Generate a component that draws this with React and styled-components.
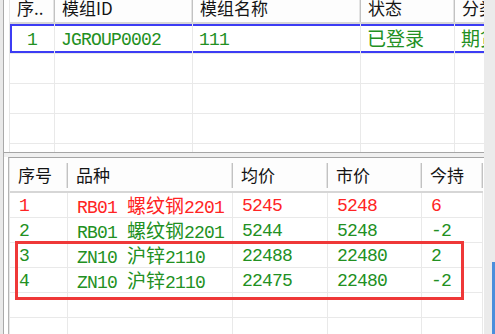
import React from "react";
import styled, { createGlobalStyle } from "styled-components";

const GlobalStyle = createGlobalStyle`
  html, body {
    margin: 0;
    padding: 0;
    width: 495px;
    height: 334px;
    overflow: hidden;
    background: #ececec;
  }
  #root {
    height: 334px;
  }
`;

const Screen = styled.div`
  display: flex;
  height: 334px;
  padding-left: 3px;
  box-sizing: border-box;
  background: #e9e9e9;
`;

const Frame = styled.div`
  width: 480px;
  border-left: 1px solid #a9a9a9;
  background: #ffffff;
  display: flex;
  flex-direction: column;
  overflow: hidden;
`;

const Gutter = styled.div`
  flex: 1;
  display: flex;
  flex-direction: column;
  align-items: flex-end;
  background: #ebebeb;
`;

const OtherWindowEdge = styled.div`
  margin-top: auto;
  width: 3px;
  height: 72px;
  background: #4a8fdc;
`;

const TopPanel = styled.div`
  height: 152px;
  flex: none;
  padding-left: 5px;
  overflow: hidden;
  border-bottom: 1px solid #a6a6a6;
`;

const Splitter = styled.div`
  height: 4px;
  flex: none;
  background: #f0f0f0;
  margin-left: -1px;
`;

const BottomPanel = styled.div`
  flex: 1;
  margin-left: 4px;
  border-left: 1px solid #b4b4b4;
  border-top: 1px solid #a6a6a6;
  overflow: hidden;
`;

const Grid = styled.div`
  width: max-content;
  border-left: 1px solid #e6e6e6;
`;

const Row = styled.div`
  display: grid;
  grid-template-columns: ${(p) => p.$cols};
  height: ${(p) => p.$h}px;
`;

const Body = styled.div`
  position: relative;
`;

const HeadCell = styled.div`
  position: relative;
  display: flex;
  align-items: center;
  padding: 0 0 ${(p) => p.$lift}px ${(p) => p.$pad}px;
  box-sizing: border-box;
  background: #fdfdfd;
  border-bottom: 2px solid #d6d6d6;
  font-family: "Noto Sans CJK SC", "Noto Sans", sans-serif;
  font-size: 17px;
  line-height: 18px;
  color: #141414;
  white-space: nowrap;
  overflow: hidden;

  &::after {
    content: "";
    position: absolute;
    right: 0;
    top: ${(p) => p.$sepTop}px;
    bottom: ${(p) => p.$sepBottom}px;
    width: 1px;
    background: #c2c2c2;
    box-shadow: -1px 0 0 #e4e4e4;
  }
`;

const Cell = styled.div`
  display: flex;
  align-items: center;
  justify-content: ${(p) => (p.$center ? "center" : "flex-start")};
  padding-left: ${(p) => (p.$center ? 0 : p.$pad)}px;
  box-sizing: border-box;
  border-right: 1px solid #e9e9e9;
  border-bottom: 1px solid #e9e9e9;
  font-family: "Liberation Mono", "Noto Sans CJK SC", monospace;
  font-size: 18px;
  letter-spacing: -0.8px;
  color: ${(p) => p.$color || "#229022"};
  white-space: pre;
  overflow: hidden;
  box-shadow: ${(p) =>
    p.$selected
      ? `inset 0 2px 0 #3c3cf4, inset 0 -2px 0 #3c3cf4${p.$first ? ", inset 2px 0 0 #3c3cf4" : ""}`
      : "none"};
`;

const CellText = styled.span`
  display: block;
  line-height: 20px;
  padding-top: 2px;
`;

const Han = styled.span`
  font-family: "Noto Sans CJK SC", sans-serif;
  font-size: 19px;
  line-height: 1;
  letter-spacing: 0;
`;

const Marker = styled.div`
  position: absolute;
  left: 5px;
  top: 48px;
  width: 449px;
  height: 59px;
  box-sizing: border-box;
  border: 3px solid #ef3838;
  pointer-events: none;
`;

const TOP_COLS = "45px 138px 168px 94px 90px";
const BOTTOM_COLS = "58px 165px 95px 94px 61px";

const topHeads = ["序..", "模组ID", "模组名称", "状态", "分类"];
const topRows = [["1", "JGROUP0002", "111", "已登录", "期货"], null, null, null, null];

const bottomHeads = ["序号", "品种", "均价", "市价", "今持"];
const RED = "#ff2424";
const bottomRows = [
  { color: RED, cells: ["1", "RB01 螺纹钢2201", "5245", "5248", "6"] },
  { cells: ["2", "RB01 螺纹钢2201", "5244", "5248", "-2"] },
  { cells: ["3", "ZN10 沪锌2110", "22488", "22480", "2"] },
  { cells: ["4", "ZN10 沪锌2110", "22475", "22480", "-2"] },
  null,
  null,
];

function withHan(text) {
  return text
    .split(/([\u4e00-\u9fff]+)/)
    .filter(Boolean)
    .map((part, i) =>
      /[\u4e00-\u9fff]/.test(part) ? <Han key={i}>{part}</Han> : part
    );
}

const emptyRow = (n) => Array.from({ length: n }, () => "");

export default function App() {
  return (
    <>
      <GlobalStyle />
      <Screen>
        <Frame>
          <TopPanel>
            <Grid>
              <Row $cols={TOP_COLS} $h={24}>
                {topHeads.map((h, i) => (
                  <HeadCell key={i} $pad={7} $lift={6} $sepTop={0} $sepBottom={0}>
                    {h}
                  </HeadCell>
                ))}
              </Row>
              {topRows.map((r, ri) => (
                <Row key={ri} $cols={TOP_COLS} $h={30}>
                  {(r || emptyRow(5)).map((c, ci) => (
                    <Cell
                      key={ci}
                      $pad={6}
                      $center={ci === 0}
                      $selected={ri === 0}
                      $first={ci === 0}
                    >
                      <CellText>{withHan(c)}</CellText>
                    </Cell>
                  ))}
                </Row>
              ))}
            </Grid>
          </TopPanel>
          <Splitter />
          <BottomPanel>
            <Grid>
              <Row $cols={BOTTOM_COLS} $h={35}>
                {bottomHeads.map((h, i) => (
                  <HeadCell key={i} $pad={8} $lift={0} $sepTop={5} $sepBottom={3}>
                    {h}
                  </HeadCell>
                ))}
              </Row>
              <Body>
                {bottomRows.map((r, ri) => (
                  <Row key={ri} $cols={BOTTOM_COLS} $h={25}>
                    {(r ? r.cells : emptyRow(5)).map((c, ci) => (
                      <Cell key={ci} $pad={9} $color={r && r.color}>
                        <CellText>{withHan(c)}</CellText>
                      </Cell>
                    ))}
                  </Row>
                ))}
                <Marker />
              </Body>
            </Grid>
          </BottomPanel>
        </Frame>
        <Gutter>
          <OtherWindowEdge />
        </Gutter>
      </Screen>
    </>
  );
}
